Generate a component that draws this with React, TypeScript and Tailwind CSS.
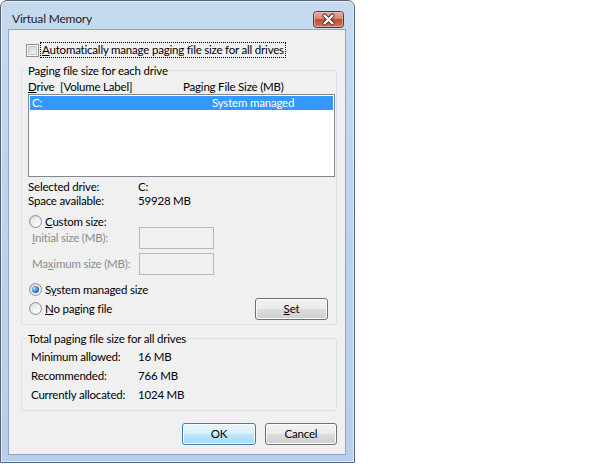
import type { ReactNode } from "react";

function CheckBox() {
  return (
    <span className="flex h-[13px] w-[13px] shrink-0 items-center justify-center border border-[#8e8f8f] bg-white">
      <span className="h-[9px] w-[9px] border border-[#c5c5c5] bg-linear-to-br from-[#d3d3d3] to-[#f7f7f7]" />
    </span>
  );
}

function Radio({ checked }: { checked?: boolean }) {
  return (
    <span className="flex h-[13px] w-[13px] shrink-0 items-center justify-center rounded-full border border-[#8e8f8f] bg-linear-to-br from-[#d2d2d2] to-[#fbfbfb]">
      {checked ? (
        <span className="h-[7px] w-[7px] rounded-full bg-[radial-gradient(circle_at_35%_35%,#a9dcff,#2f7cc4_55%,#174a80)]" />
      ) : (
        <span className="h-[9px] w-[9px] rounded-full bg-linear-to-br from-[#e4e4e4] to-white" />
      )}
    </span>
  );
}

function Button({ children, primary, width }: { children: ReactNode; primary?: boolean; width: string }) {
  return (
    <button
      className={
        "h-[22px] rounded-[3px] border leading-none text-black shadow-[inset_0_0_0_1px_#fcfcfc] " +
        width +
        (primary
          ? " border-[#3c7fb1] bg-[linear-gradient(#ebf7fe,#d9f0fc_50%,#bee6fd_50%,#a9daf5)]"
          : " border-[#707070] bg-[linear-gradient(#f2f2f2,#ebebeb_50%,#dddddd_50%,#cfcfcf)]")
      }
    >
      {children}
    </button>
  );
}

function CloseButton() {
  return (
    <svg width="31" height="17" viewBox="0 0 31 17">
      <defs>
        <linearGradient id="cb" x1="0" y1="0" x2="0" y2="1">
          <stop offset="0" stopColor="#eab1a6" />
          <stop offset="0.45" stopColor="#d8826f" />
          <stop offset="0.5" stopColor="#c74a33" />
          <stop offset="1" stopColor="#d5755c" />
        </linearGradient>
      </defs>
      <rect x="0.5" y="0.5" width="30" height="16" rx="3" fill="url(#cb)" stroke="#6b2e25" />
      <rect x="1.5" y="1.5" width="28" height="14" rx="2" fill="none" stroke="#f3c9bf" strokeOpacity="0.6" />
      <path d="M11.5 4.5 L19.5 12.5 M19.5 4.5 L11.5 12.5" stroke="#4e2a26" strokeWidth="4.2" strokeLinecap="round" />
      <path d="M11.5 4.5 L19.5 12.5 M19.5 4.5 L11.5 12.5" stroke="#ffffff" strokeWidth="2.4" strokeLinecap="round" />
    </svg>
  );
}

export default function App() {
  const totals = [
    ["Minimum allowed:", "16 MB"],
    ["Recommended:", "766 MB"],
    ["Currently allocated:", "1024 MB"],
  ];

  return (
    <div className="h-[464px] w-[614px] whitespace-nowrap bg-white font-['Lato',sans-serif] text-[11.5px] tracking-[-0.2px] text-black">
      <div className="h-[463px] w-[355px] rounded-t-[7px] border border-[#55667a] bg-linear-to-b from-[#c6daee] via-[#bcd3ec] to-[#b7cfe9] shadow-[inset_0_0_0_1px_rgba(255,255,255,0.55)]">
        {/* title bar */}
        <div className="flex h-[28px] items-start justify-between pl-[11px] pr-[10px]">
          <span className="mt-[11px] text-[12px] leading-[14px] text-[#1e1e1e]">Virtual Memory</span>
          <div className="mt-[10px]">
            <CloseButton />
          </div>
        </div>

        {/* client area */}
        <div className="ml-[7px] h-[426px] w-[338px] border border-[#8ea6c1] bg-[#f0f0f0]">
          <div className="mt-[12px] flex h-[16px] items-center">
            <span className="ml-[17px]">
              <CheckBox />
            </span>
            <span className="ml-[1px] border border-dotted border-black px-[1px] leading-[14px]">
              <u>A</u>utomatically manage paging file size for all drives
            </span>
          </div>

          <fieldset className="ml-[12px] mt-[5px] w-[316px] rounded-[3px] border border-[#d5dfe5] pb-[5px]">
            <legend className="ml-[5px] px-[1px] leading-[15px]">Paging file size for each drive</legend>
            <div className="ml-[6px] mt-[1px] flex h-[15px] items-center leading-[15px]">
              <span className="w-[32px]">
                <u>D</u>rive
              </span>
              <span className="w-[123px]">[Volume Label]</span>
              <span>Paging File Size (MB)</span>
            </div>
            <div className="ml-[6px] h-[83px] w-[307px] border border-[#828790] bg-white p-[1px]">
              <div className="flex h-[14px] items-center bg-[#3399ff] pl-[2px] leading-[14px] text-white">
                <span className="w-[180px]">C:</span>
                <span>System managed</span>
              </div>
            </div>

            <div className="ml-[6px] mt-[3px] leading-[14px]">
              <div className="flex">
                <span className="w-[110px]">Selected drive:</span>
                <span>C:</span>
              </div>
              <div className="flex">
                <span className="w-[110px]">Space available:</span>
                <span>59928 MB</span>
              </div>
            </div>

            <div className="ml-[7px] mt-[7px] flex h-[13px] items-center gap-[3px] leading-[13px]">
              <Radio />
              <span>
                <u>C</u>ustom size:
              </span>
            </div>
            <div className="ml-[10px] mt-[-1px] flex h-[22px] items-center text-[#8a8a8a]">
              <span className="w-[107px]">
                <u>I</u>nitial size (MB):
              </span>
              <span className="h-[22px] w-[75px] border border-[#b8b8b8] bg-[#f0f0f0]" />
            </div>
            <div className="ml-[10px] mt-[4px] flex h-[22px] items-center text-[#8a8a8a]">
              <span className="w-[107px]">
                Ma<u>x</u>imum size (MB):
              </span>
              <span className="h-[22px] w-[75px] border border-[#b8b8b8] bg-[#f0f0f0]" />
            </div>

            <div className="ml-[7px] mt-[8px] flex h-[13px] items-center gap-[3px] leading-[13px]">
              <Radio checked />
              <span>
                S<u>y</u>stem managed size
              </span>
            </div>
            <div className="ml-[7px] mt-[2px] flex h-[21px] items-center justify-between pr-[8px]">
              <div className="flex items-center gap-[3px] leading-[13px]">
                <Radio />
                <span>
                  <u>N</u>o paging file
                </span>
              </div>
              <Button width="w-[73px]">
                <u>S</u>et
              </Button>
            </div>
          </fieldset>

          <fieldset className="ml-[12px] mt-[6px] w-[316px] rounded-[3px] border border-[#d5dfe5] pb-[6px]">
            <legend className="ml-[5px] px-[1px] leading-[15px]">Total paging file size for all drives</legend>
            <div className="ml-[9px] mt-[1px]">
              {totals.map(([label, value]) => (
                <div key={label} className="flex leading-[19px]">
                  <span className="w-[107px]">{label}</span>
                  <span>{value}</span>
                </div>
              ))}
            </div>
          </fieldset>

          <div className="mt-[12px] flex justify-end gap-[9px] pr-[8px]">
            <Button primary width="w-[74px]">
              OK
            </Button>
            <Button width="w-[72px]">Cancel</Button>
          </div>
        </div>
      </div>
    </div>
  );
}
